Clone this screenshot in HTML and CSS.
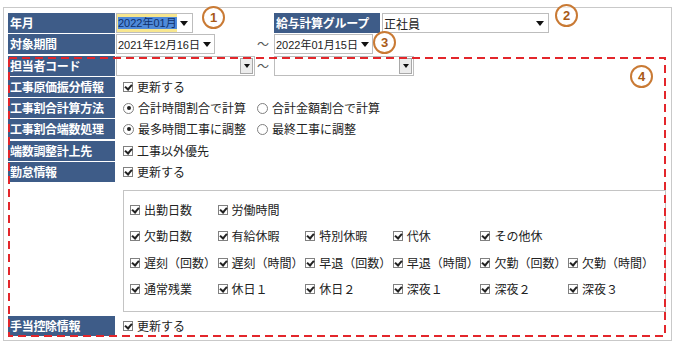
FILE: index.html
```html
<!DOCTYPE html>
<html lang="ja">
<head>
<meta charset="UTF-8">
<title>給与計算 条件設定</title>
<link rel="stylesheet" href="styles.css">
</head>
<body>
<div class="panel">
    <div class="row">
        <div class="label">年月</div>
        <div class="select select-month"><span class="select-text"><span class="picked">2022年01月</span></span><span class="arrow"></span></div>
        <div class="label label-group">給与計算グループ</div>
        <div class="select select-group"><span class="select-text">正社員</span><span class="arrow"></span></div>
    </div>
    <div class="row">
        <div class="label">対象期間</div>
        <div class="select select-date"><span class="select-text">2021年12月16日</span><span class="arrow"></span></div>
        <span class="tilde">〜</span>
        <div class="select select-date"><span class="select-text">2022年01月15日</span><span class="arrow"></span></div>
    </div>
    <div class="row">
        <div class="label">担当者コード</div>
        <div class="select select-code"><span class="select-text"></span><span class="arrow-btn"><span class="arrow small"></span></span></div>
        <span class="tilde tilde-near">〜</span>
        <div class="select select-code wide"><span class="select-text"></span><span class="arrow-btn"><span class="arrow small"></span></span></div>
    </div>
    <div class="row">
        <div class="label">工事原価振分情報</div>
        <div class="value"><span class="check"><i class="box"></i>更新する</span></div>
    </div>
    <div class="row">
        <div class="label">工事割合計算方法</div>
        <div class="value">
            <span class="radio on"><i class="dot"></i>合計時間割合で計算</span>
            <span class="radio"><i class="dot"></i>合計金額割合で計算</span>
        </div>
    </div>
    <div class="row">
        <div class="label">工事割合端数処理</div>
        <div class="value">
            <span class="radio on"><i class="dot"></i>最多時間工事に調整</span>
            <span class="radio"><i class="dot"></i>最終工事に調整</span>
        </div>
    </div>
    <div class="row">
        <div class="label">端数調整計上先</div>
        <div class="value"><span class="check"><i class="box"></i>工事以外優先</span></div>
    </div>
    <div class="row">
        <div class="label">勤怠情報</div>
        <div class="value"><span class="check"><i class="box"></i>更新する</span></div>
    </div>

    <div class="attend-box">
        <span class="check"><i class="box"></i>出勤日数</span>
        <span class="check"><i class="box"></i>労働時間</span>
        <span></span><span></span><span></span><span></span>

        <span class="check"><i class="box"></i>欠勤日数</span>
        <span class="check"><i class="box"></i>有給休暇</span>
        <span class="check"><i class="box"></i>特別休暇</span>
        <span class="check"><i class="box"></i>代休</span>
        <span class="check"><i class="box"></i>その他休</span>
        <span></span>

        <span class="check"><i class="box"></i>遅刻（回数）</span>
        <span class="check"><i class="box"></i>遅刻（時間）</span>
        <span class="check"><i class="box"></i>早退（回数）</span>
        <span class="check"><i class="box"></i>早退（時間）</span>
        <span class="check"><i class="box"></i>欠勤（回数）</span>
        <span class="check"><i class="box"></i>欠勤（時間）</span>

        <span class="check"><i class="box"></i>通常残業</span>
        <span class="check"><i class="box"></i>休日１</span>
        <span class="check"><i class="box"></i>休日２</span>
        <span class="check"><i class="box"></i>深夜１</span>
        <span class="check"><i class="box"></i>深夜２</span>
        <span class="check"><i class="box"></i>深夜３</span>
    </div>

    <div class="row row-last">
        <div class="label">手当控除情報</div>
        <div class="value"><span class="check"><i class="box"></i>更新する</span></div>
    </div>

    <!-- 注釈：赤い点線の範囲と丸数字 -->
    <svg class="dash-area" width="658" height="280" viewBox="0 0 658 280">
        <rect x="1" y="1" width="656" height="278" fill="none" stroke="#e3262b" stroke-width="2" stroke-dasharray="8 5"/>
    </svg>
    <span class="mark mark-1">1</span>
    <span class="mark mark-2">2</span>
    <span class="mark mark-3">3</span>
    <span class="mark mark-4">4</span>
</div>
</body>
</html>
```

FILE: styles.css
```css
body{margin:0;color:#222;font:12px/1.5 "Noto Sans CJK JP","Noto Sans",sans-serif;background:#fff;}
.panel{position:relative;box-sizing:border-box;width:669px;height:334px;margin:7px 0 0 3px;padding:5px 0 0 4px;border:1px solid #c9c9c9;}

.row{display:flex;align-items:center;height:20px;margin-bottom:1.3px;}
.label{flex:none;box-sizing:border-box;width:107px;height:20px;padding-left:2px;background:#3e5c88;color:#fff;font-weight:bold;line-height:20px;white-space:nowrap;letter-spacing:-0.3px;}
.label-group{width:106px;margin-left:81px;}
.value{display:flex;align-items:center;padding-left:8px;}

/* セレクト */
.select{flex:none;box-sizing:border-box;display:flex;align-items:center;height:20px;margin-left:1px;border:1px solid #bdbdbd;background:#fff;font:11px "Liberation Sans","Noto Sans CJK JP",sans-serif;}
.select-text{flex:1;padding-left:1px;white-space:nowrap;}
.select-month{width:77px;}
.select-month .select-text{height:18px;line-height:18px;background:#f7e68f;}
.picked{background:#4f8ad9;color:#10306b;}
.select-group{width:167px;margin-left:2px;font-size:12px;}
.select-date{width:99px;}
.select-code{width:139px;}
.select-code.wide{width:140px;}
.arrow{flex:none;width:0;height:0;margin:0 4px 0 3px;border-left:4px solid transparent;border-right:4px solid transparent;border-top:5px solid #111;}
.arrow.small{margin:0;border-left-width:3px;border-right-width:3px;border-top-width:4px;}
.arrow-btn{flex:none;box-sizing:border-box;display:flex;align-items:center;justify-content:center;width:13px;height:16px;margin-right:1px;border:1px solid #a8a8a8;background:#ececec;}
.tilde{flex:none;width:16px;margin-left:42px;color:#555;text-align:left;}
.tilde-near{margin-left:2px;}

/* チェック・ラジオ */
.check,.radio{display:inline-flex;align-items:center;white-space:nowrap;}
.box{position:relative;flex:none;box-sizing:border-box;width:10px;height:10px;margin-right:4px;border:1px solid #808080;background:#fff;}
.box::after{content:"";position:absolute;left:2px;top:0;width:3px;height:5px;border-right:2px solid #222;border-bottom:2px solid #222;transform:rotate(40deg);}
.radio{margin-right:11px;}
.dot{position:relative;flex:none;box-sizing:border-box;width:11px;height:11px;margin-right:4px;border:1px solid #808080;border-radius:50%;background:#fff;}
.radio.on .dot::after{content:"";position:absolute;left:2.5px;top:2.5px;width:4px;height:4px;border-radius:50%;background:#222;}

/* 勤怠項目 */
.attend-box{box-sizing:border-box;display:grid;grid-template-columns:repeat(6,87.6px);grid-auto-rows:26.5px;align-items:center;width:543px;height:122px;margin:7.6px 0 0 115px;padding:6px 0 0 6px;border:1px solid #c4c4c4;}
.row-last{margin-top:4px;}

/* 注釈 */
.dash-area{position:absolute;left:4px;top:49px;}
.mark{position:absolute;box-sizing:border-box;width:23px;height:23px;border:2px solid #c97a34;border-radius:50%;background:rgba(255,255,255,.6);color:#a85a17;font:bold 13px/19px "Liberation Sans",sans-serif;text-align:center;}
.mark-1{left:198px;top:-2px;}
.mark-2{left:551px;top:-4px;}
.mark-3{left:369px;top:23px;}
.mark-4{left:626px;top:57px;}
```
